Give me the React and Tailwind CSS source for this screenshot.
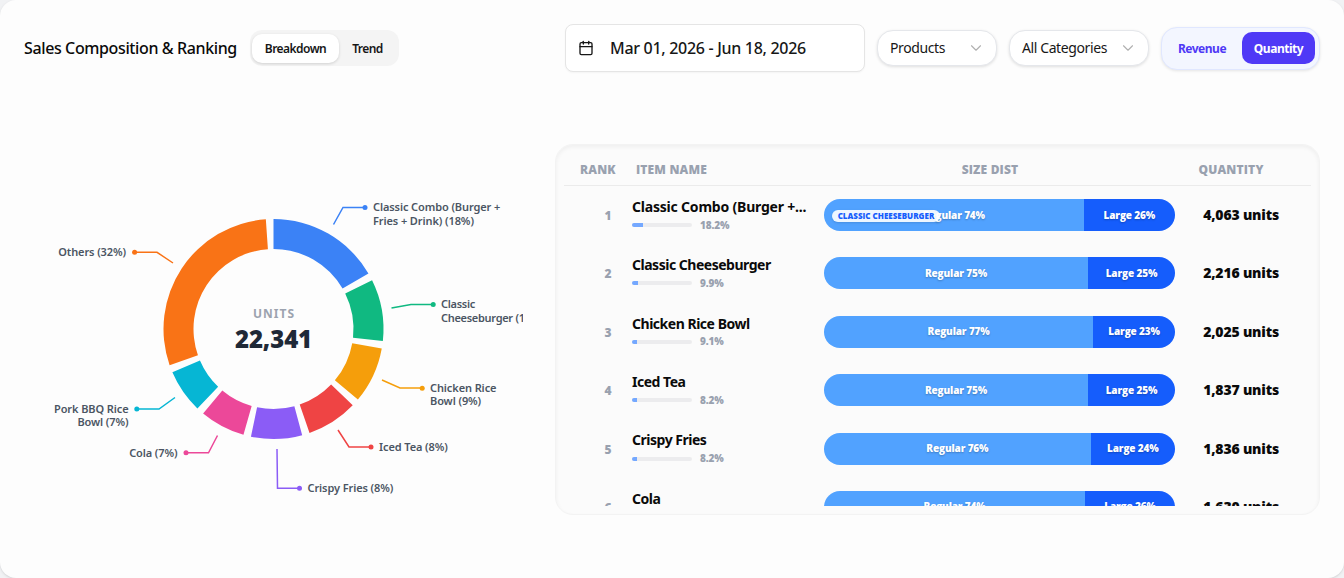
import React from 'react';
import { Calendar, ChevronDown } from 'lucide-react';

const slices = [
  {
    value: 18.19,
    color: '#3b82f6',
    line: '333.5,224.5 343,207.5 365,207.5',
    dot: [365, 207.5],
    text: ['Classic Combo (Burger +', 'Fries + Drink) (18%)'],
    at: [373, 211.3],
  },
  {
    value: 9.92,
    color: '#10b981',
    line: '391.5,308 411,304.5 433,304.5',
    dot: [433.2, 304.5],
    text: ['Classic', 'Cheeseburger (10%)'],
    at: [441, 308.3],
    tight: true,
  },
  {
    value: 9.06,
    color: '#f59e0b',
    line: '382,380 400,388 422,388',
    dot: [422.2, 388.3],
    text: ['Chicken Rice', 'Bowl (9%)'],
    at: [430, 392],
  },
  {
    value: 8.22,
    color: '#ef4444',
    line: '338,430 349,447 371,447',
    dot: [371, 447],
    text: ['Iced Tea (8%)'],
    at: [379, 451],
  },
  {
    value: 8.22,
    color: '#8b5cf6',
    line: '277,449 277.5,488.3 299.5,488.3',
    dot: [299.5, 488.3],
    text: ['Crispy Fries (8%)'],
    at: [307.5, 492],
  },
  {
    value: 7.3,
    color: '#ec4899',
    line: '217.5,435.5 208.5,452.8 186,452.8',
    dot: [186, 452.8],
    text: ['Cola (7%)'],
    at: [177.5, 457],
    end: true,
  },
  {
    value: 7.02,
    color: '#06b6d4',
    line: '175,397.5 159,409 137,409',
    dot: [136.8, 409],
    text: ['Pork BBQ Rice', 'Bowl (7%)'],
    at: [128.5, 413],
    end: true,
  },
  {
    value: 32.07,
    color: '#f97316',
    line: '173,263 157,252.3 135,252.3',
    dot: [134.6, 252.3],
    text: ['Others (32%)'],
    at: [126, 256],
    end: true,
  },
];

const rows = [
  { name: 'Classic Combo (Burger +...', pct: 18.2, regular: 74, large: 26, qty: '4,063' },
  { name: 'Classic Cheeseburger', pct: 9.9, regular: 75.2, large: 24.8, qty: '2,216' },
  { name: 'Chicken Rice Bowl', pct: 9.1, regular: 76.7, large: 23.3, qty: '2,025' },
  { name: 'Iced Tea', pct: 8.2, regular: 75.2, large: 24.8, qty: '1,837' },
  { name: 'Crispy Fries', pct: 8.2, regular: 76, large: 24, qty: '1,836' },
  { name: 'Cola', pct: 7.3, regular: 74.4, large: 25.6, qty: '1,630' },
];

const CX = 273.5;
const CY = 329;
const OUTER = 110;
const INNER = 80;
const PAD = 4;

function point(radius, degrees) {
  const rad = (degrees * Math.PI) / 180;
  return `${(CX + radius * Math.cos(rad)).toFixed(2)},${(CY - radius * Math.sin(rad)).toFixed(2)}`;
}

function arcPath(start, end) {
  return `M${point(OUTER, start)} A${OUTER},${OUTER} 0 0 1 ${point(OUTER, end)} L${point(INNER, end)} A${INNER},${INNER} 0 0 0 ${point(INNER, start)} Z`;
}

function DonutChart() {
  const sweep = 360 - slices.length * PAD;
  let angle = 90;

  return (
    <svg viewBox="24 96 499 458" className="h-[458px] w-[499px] shrink-0 overflow-hidden">
      {slices.map((slice) => {
        const start = angle;
        const end = start - (slice.value / 100) * sweep;
        angle = end - PAD;
        return (
          <g key={slice.color}>
            <path d={arcPath(start, end)} fill={slice.color} />
            <polyline points={slice.line} fill="none" stroke={slice.color} strokeWidth="1.5" />
            <circle cx={slice.dot[0]} cy={slice.dot[1]} r="2.5" fill={slice.color} />
            <text
              textAnchor={slice.end ? 'end' : 'start'}
              className={`fill-[#4b5563] text-[11px] font-semibold ${slice.tight ? 'tracking-[-0.3px]' : 'tracking-[-0.1px]'}`}
            >
              {slice.text.map((line, i) => (
                <tspan key={line} x={slice.at[0]} y={slice.at[1] + i * 13.4}>
                  {line}
                </tspan>
              ))}
            </text>
          </g>
        );
      })}
      <text x="274" y="318" textAnchor="middle" className="fill-[#9ca3af] text-[12px] font-bold tracking-[1px]">
        UNITS
      </text>
      <text
        x="273.5"
        y="347.6"
        textAnchor="middle"
        className="fill-[#1f2937] font-['Open_Sans'] text-[24px] font-extrabold tracking-[-0.1px]"
      >
        22,341
      </text>
    </svg>
  );
}

function Select({ label, className }) {
  return (
    <button
      type="button"
      className={`flex h-9 items-center justify-between rounded-2xl border border-[#e5e7eb] bg-white pr-[11px] pl-3 text-sm tracking-[-0.4px] text-[#171717] shadow-[0_1px_3px_rgba(0,0,0,0.12)] ${className}`}
    >
      {label}
      <ChevronDown className="h-[18px] w-[18px] text-[#b0b0b0]" strokeWidth={1.5} />
    </button>
  );
}

function Header() {
  return (
    <div className="flex h-12 items-center justify-between">
      <div className="flex items-center gap-3">
        <h3 className="w-[214px] text-base font-medium tracking-[-0.38px] whitespace-nowrap text-[#0a0a0a]">
          Sales Composition &amp; Ranking
        </h3>
        <div className="flex h-9 w-[149px] items-center rounded-xl bg-[#f4f4f4] pl-0.5 text-xs font-semibold tracking-[-0.55px] text-[#171717]">
          <button type="button" className="h-[29px] w-[87px] rounded-[10px] bg-white pt-px shadow-[0_1px_3px_rgba(0,0,0,0.15)]">
            Breakdown
          </button>
          <button type="button" className="h-[29px] w-[57px] pt-px">
            Trend
          </button>
        </div>
      </div>

      <div className="flex items-center gap-3">
        <button
          type="button"
          className="flex h-12 w-[300px] items-center rounded-lg border border-[#e5e5e5] bg-white px-3 text-base font-medium tracking-[-0.3px] text-[#171717] shadow-[0_1px_2px_rgba(0,0,0,0.04)]"
        >
          <Calendar className="mr-4 h-4 w-4" strokeWidth={2} />
          Mar 01, 2026 - Jun 18, 2026
        </button>
        <Select label="Products" className="w-[120px]" />
        <Select label="All Categories" className="w-[140px]" />
        <div className="flex h-[43px] w-[159px] items-center rounded-2xl border border-[#e0e7ff] bg-[#f3f6ff] pl-1 text-xs font-bold tracking-[-0.48px] shadow-[0_1px_3px_rgba(0,0,0,0.1)]">
          <button type="button" className="h-8 w-[72px] pt-0.5 text-[#4f39f6]">
            Revenue
          </button>
          <button type="button" className="ml-1 h-8 w-[73px] rounded-[10px] bg-[#4f39f6] pt-0.5 text-white">
            Quantity
          </button>
        </div>
      </div>
    </div>
  );
}

function SizeBar({ row, tooltip }) {
  return (
    <div className="relative w-[351px] shrink-0">
      <div className="flex h-8 overflow-hidden rounded-full font-['Open_Sans'] text-[10px] font-extrabold tracking-[-0.14px] text-white [text-shadow:0_1px_2px_rgba(0,0,0,0.25)]">
        <div className="flex items-center justify-center bg-[#51a2ff]" style={{ width: `${row.regular}%` }}>
          Regular {Math.round(row.regular)}%
        </div>
        <div className="flex flex-1 items-center justify-center bg-[#155dfc]">Large {Math.round(row.large)}%</div>
      </div>
      {tooltip ? (
        <span className="absolute top-[11px] left-2 flex h-3 w-[108px] items-center justify-center rounded-full bg-white/90 font-['Open_Sans'] text-[8px] font-extrabold whitespace-nowrap text-[#155dfc] shadow-sm">
          {tooltip}
        </span>
      ) : null}
    </div>
  );
}

function RankingTable() {
  return (
    <div className="mt-12 flex h-[371px] w-[765px] flex-col rounded-[18px] border border-[#f3f3f3] bg-[#fbfbfb] px-2 pt-2 pb-2 shadow-[inset_0_2px_4px_rgba(0,0,0,0.05)]">
      <div className="flex h-[33px] shrink-0 items-center border-b border-[#ebebeb] pt-0.5 font-['Open_Sans'] text-xs font-extrabold tracking-[0.17px] text-[#99a1af]">
        <div className="w-[72px] pl-4">RANK</div>
        <div className="w-[264px]">ITEM NAME</div>
        <div className="w-[180px] text-center">SIZE DIST</div>
        <div className="ml-[71px] w-[160px] text-center">QUANTITY</div>
      </div>
      <div className="-mt-[0.2px] flex-1 overflow-hidden">
        {rows.map((row, i) => (
          <div key={row.name} className="flex h-[58.4px] items-center">
            <div className="w-[68px] shrink-0 pt-0.5 pl-[20px] text-center font-['Open_Sans'] text-xs font-extrabold text-[#99a1af]">
              {i + 1}
            </div>
            <div className="w-[176px] shrink-0">
              <div
                className={`-mt-[0.6px] mb-[0.6px] text-sm leading-5 font-bold whitespace-nowrap text-[#0a0a0a] ${i === 0 ? 'tracking-[-0.2px]' : 'tracking-[-0.48px]'}`}
              >
                {row.name}
              </div>
              <div className="flex h-[15px] items-center gap-2">
                <div className="h-1 w-[60px] overflow-hidden rounded-full bg-[#ececee]">
                  <div className="h-full bg-[#74a8ff]" style={{ width: `${row.pct}%` }} />
                </div>
                <span className="font-['Open_Sans'] text-[10px] font-extrabold tracking-[-0.1px] text-[#99a1af]">{row.pct}%</span>
              </div>
            </div>
            <div className="w-4 shrink-0" />
            <SizeBar row={row} tooltip={i === 0 ? 'CLASSIC CHEESEBURGER' : null} />
            <div className="w-[104px] shrink-0 text-right font-['Open_Sans'] text-sm font-extrabold tracking-[-0.18px] text-[#0a0a0a]">
              {row.qty} units
            </div>
          </div>
        ))}
      </div>
    </div>
  );
}

export default function App() {
  return (
    <div className="h-[578px] w-[1344px] overflow-hidden bg-[#f1f2f4] font-['Noto_Sans','Open_Sans',sans-serif]">
      <div className="h-full rounded-2xl bg-[#fdfdfd] p-6 shadow-sm">
        <Header />
        <div className="mt-6 flex justify-between">
          <DonutChart />
          <RankingTable />
        </div>
      </div>
    </div>
  );
}
